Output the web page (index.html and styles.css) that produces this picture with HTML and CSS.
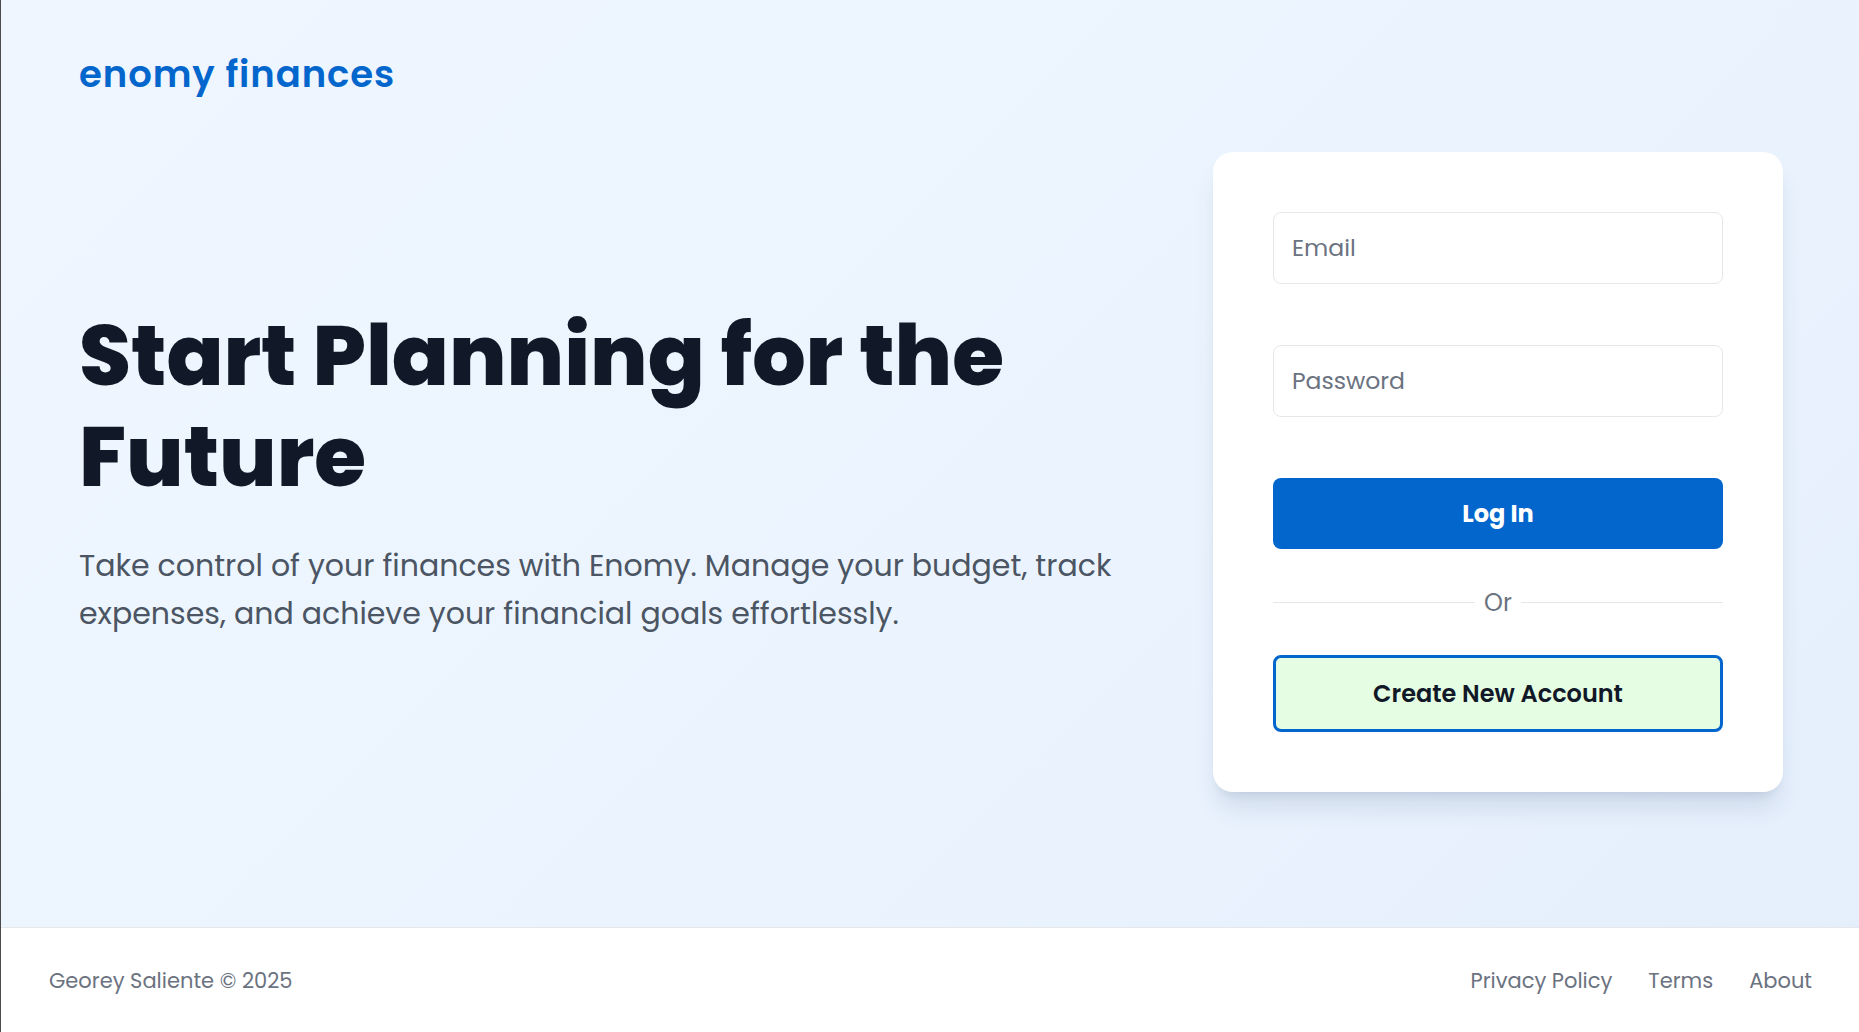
FILE: index.html
```html
<!DOCTYPE html>
<html lang="en">
<head>
<meta charset="utf-8">
<title>Enomy Finances — Log In</title>
<link rel="stylesheet" href="styles.css">
</head>
<body>
<div class="page">
  <main class="main">
    <header class="header">
      <a class="brand" href="#">enomy finances</a>
    </header>
    <section class="hero">
      <div class="intro">
        <h1 class="title">Start Planning for the Future</h1>
        <p class="lead">Take control of your finances with Enomy. Manage your budget, track expenses, and achieve your financial goals effortlessly.</p>
      </div>
      <form class="card">
        <input class="field" type="email" placeholder="Email">
        <input class="field field-gap" type="password" placeholder="Password">
        <button class="btn btn-primary" type="button">Log In</button>
        <div class="divider"><span class="divider-line"></span><span class="divider-text">Or</span><span class="divider-line"></span></div>
        <button class="btn btn-secondary" type="button">Create New Account</button>
      </form>
    </section>
  </main>
  <footer class="footer">
    <span class="copy">Georey Saliente © 2025</span>
    <nav class="footer-links">
      <a href="#">Privacy Policy</a>
      <a href="#">Terms</a>
      <a href="#">About</a>
    </nav>
  </footer>
</div>
</body>
</html>
```

FILE: styles.css
```css
* { box-sizing: border-box; }
html, body { height: 100%; }
body {
  margin: 0;
  font-family: "Poppins", "Inter", "Noto Sans", sans-serif;
  border-left: 1px solid #4b4b4b;
  color: #111827;
}
.page {
  min-height: 100vh;
  display: flex;
  flex-direction: column;
}
.main {
  flex: 1;
  display: flex;
  flex-direction: column;
  padding: 0 76px 0 78px;
  background: linear-gradient(135deg, #eff6ff 0%, #ebf4fe 55%, #e5effc 100%);
}
.header { padding-top: 52px; }
.brand {
  display: inline-block;
  font-size: 37px;
  line-height: 44px;
  font-weight: 600;
  letter-spacing: 0.025em;
  color: #0366cc;
  text-decoration: none;
}
.hero {
  flex: 1;
  display: flex;
  align-items: center;
  justify-content: space-between;
  padding-bottom: 80px;
}
.intro { max-width: 1060px; }
.title {
  margin: 0 0 35px;
  font-size: 84px;
  line-height: 101px;
  font-weight: 800;
  letter-spacing: 0;
  color: #111827;
}
.lead {
  margin: 0;
  font-size: 30px;
  line-height: 48px;
  color: #4b5563;
}
.card {
  width: 570px;
  flex: none;
  display: flex;
  flex-direction: column;
  padding: 60px;
  background: #fff;
  border-radius: 20px;
  box-shadow: 0 20px 25px -5px rgba(30, 58, 100, 0.12), 0 8px 10px -6px rgba(30, 58, 100, 0.1);
}
.field {
  height: 72px;
  padding: 0 18px;
  border: 1px solid #e5e7eb;
  border-radius: 8px;
  font-family: inherit;
  font-size: 23.5px;
  color: #111827;
  background: #fff;
  outline: none;
}
.field::placeholder { color: #6b7280; }
.field-gap { margin-top: 61px; }
.btn {
  font-family: inherit;
  cursor: pointer;
  border-radius: 8px;
}
.btn-primary {
  margin-top: 61px;
  height: 71px;
  border: 0;
  background: #0366cc;
  color: #fff;
  font-size: 24px;
  font-weight: 700;
}
.divider {
  margin: 37px 0 35px;
  height: 34px;
  display: flex;
  align-items: center;
  gap: 9px;
}
.divider-line { flex: 1; height: 1px; background: #e5e7eb; }
.divider-text { font-size: 24px; color: #6b7280; }
.btn-secondary {
  height: 77px;
  border: 3px solid #0366cc;
  background: #e5fde3;
  color: #111827;
  font-size: 24px;
  font-weight: 600;
}
.footer {
  height: 105px;
  flex: none;
  display: flex;
  align-items: center;
  justify-content: space-between;
  padding: 0 47px 0 48px;
  background: #fff;
  border-top: 1px solid #e5e7eb;
  font-size: 21px;
  color: #6b7280;
}
.footer-links { display: flex; gap: 36px; }
.footer-links a { color: #6b7280; text-decoration: none; }
```
